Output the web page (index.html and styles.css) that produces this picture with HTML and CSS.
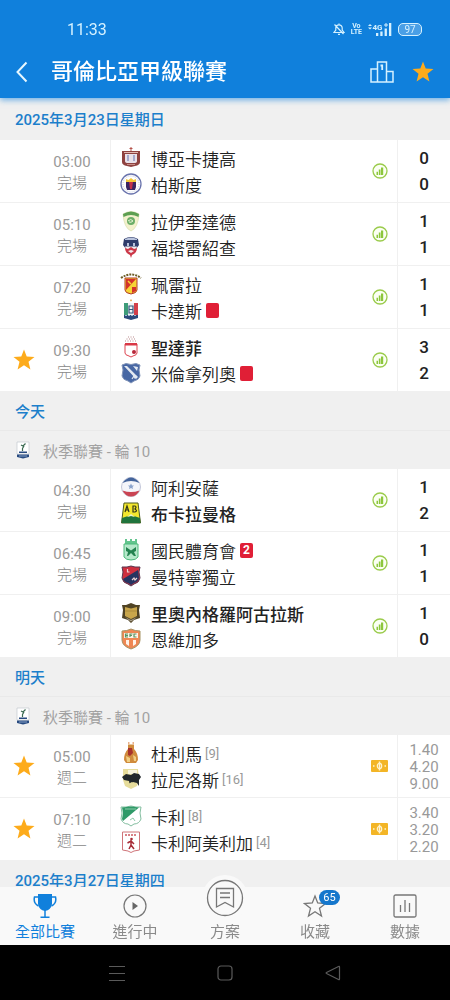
FILE: index.html
```html
<!DOCTYPE html>
<html lang="zh-Hant">
<head>
    <meta charset="UTF-8" />
    <meta name="viewport" content="width=device-width, initial-scale=1" />
    <title>哥倫比亞甲級聯賽</title>
    <link rel="stylesheet" href="styles.css">
</head>
<body>
    <!-- shared icons -->
    <svg class="sprite" aria-hidden="true">
        <symbol id="star" viewBox="0 0 22 22">
            <path fill="#fdab1b" d="M11 .5l2.700 7 7.800.6-6 4.700 1.900 7.700L11 16.200l-6.400 4.300 1.900-7.700-6-4.700 7.800-.6z"/>
        </symbol>
        <symbol id="stats" viewBox="0 0 16 16">
            <circle cx="8" cy="8" r="7" fill="#fbfff3" stroke="#9acb4b" stroke-width="1.300"/>
            <path fill="#8cc63c" d="M4.500 8.800h1.500V12H4.500zM6.800 6.500h1.700V12H6.800zM9 4.500h2.200V12H9z"/>
        </symbol>
        <symbol id="odds" viewBox="0 0 17 12">
            <rect width="17" height="12" rx="1" fill="#f3b526"/>
            <ellipse cx="8.500" cy="6" rx="2.200" ry="2.600" fill="none" stroke="#fff3cf" stroke-width="1.200"/>
            <path stroke="#fff3cf" stroke-width="1.500" d="M8.500 1.500v9M2 6h1.500M13.500 6H15"/>
        </symbol>
        <symbol id="league" viewBox="0 0 14 18">
            <path fill="#fff" stroke="#c3c9ce" stroke-width=".7" d="M1 1h12v12H1z"/>
            <path fill="none" stroke="#3b6b52" stroke-width="1.200" d="M5 4l2 1 2.500-2.500M8 5L6.500 7.500V10"/>
            <path fill="#274a80" d="M3 10.500h8V12H3zM1 13.500h12V16l-6 1.500L1 16z"/>
            <path stroke="#9db4d6" stroke-width=".8" d="M3 15h8"/>
        </symbol>
    </svg>

    <div class="app">
        <header class="header">
            <div class="status">
                <span class="clock">11:33</span>
                <div class="status-icons">
                    <svg width="12" height="12" viewBox="0 0 12 12" fill="none" stroke="#d5f1ff" stroke-width="1.200">
                        <path d="M1 9.500h10L9.200 7V5a3.200 3.200 0 0 0-6.400 0v2zM6 .5v1.500M5 11.300h2M1.500 1.500l9 9.500"/>
                    </svg>
                    <span class="volte"><span>Vo</span><span>LTE</span></span>
                    <svg width="24" height="13" viewBox="0 0 24 13" fill="#d5f1ff">
                        <path d="M0 3l2-2 2 2zM0 4.500h4l-2 2zM8 10h2.300v3H8zM12.300 8.500h2.300V13h-2.300zM16.600 5.500h2.300V13h-2.300zM21 0h2.300v13H21z"/>
                        <text x="4.500" y="7" class="net">4G</text>
                        <path d="M16 1.500h4v1h-4zM17.500 0h1v4h-1z"/>
                    </svg>
                    <span class="battery">97</span>
                </div>
            </div>
            <div class="titlebar">
                <button class="icon-btn back" aria-label="返回">
                    <svg width="14" height="22" viewBox="0 0 14 22" fill="none" stroke="#e6f7ff" stroke-width="2"><path d="M10.500 1.500L1.500 11l9 9.500"/></svg>
                </button>
                <h1>哥倫比亞甲級聯賽</h1>
                <button class="icon-btn" aria-label="排名">
                    <svg width="24" height="22" viewBox="0 0 24 22" fill="none" stroke="#d5f1ff" stroke-width="1.500">
                        <path d="M7.500 21V1h9v20M7.500 8H1v13h22V10.500h-6.500"/>
                        <path stroke-width="1.800" d="M10.500 4.500h1.700V9"/>
                    </svg>
                </button>
                <button class="icon-btn" aria-label="收藏">
                    <svg width="22" height="22"><use href="#star"/></svg>
                </button>
            </div>
        </header>

        <main class="matches">
            <section>
                <h2 class="date first">2025年3月23日星期日</h2>
                <ul>
                    <li class="match">
                        <div class="fav"></div>
                        <div class="time"><span>03:00</span><span>完場</span></div>
                        <div class="teams">
                            <div class="team">
                                <svg class="crest" viewBox="0 0 22 22">
                                    <path d="M11 0v4M9.500 1.500h3" stroke="#b5524a"/>
                                    <path fill="#8f4240" d="M2 4h18v11q0 3-5 4l-4 1-4-1q-5-1-5-4z"/>
                                    <path fill="#e9e2ea" d="M5 7h12v7q0 2-3 2H8q-3 0-3-2z"/>
                                    <path fill="#a6a9cc" d="M7 8h2v6H7zM13 8h2v6h-2z"/>
                                    <path stroke="#e3b9b2" d="M4 5.500h14"/>
                                    <path stroke="#c98f88" d="M7 17.500h8"/>
                                </svg>
                                <span>博亞卡捷高</span>
                            </div>
                            <div class="team">
                                <svg class="crest" viewBox="0 0 22 22">
                                    <circle cx="11" cy="11" r="10" fill="#fff" stroke="#6a74ad" stroke-width="1.300"/>
                                    <circle cx="11" cy="11" r="8" fill="none" stroke="#c5cae0" stroke-dasharray="1 1"/>
                                    <path fill="#f3c63a" d="M6 6l2.500 1L11 5l2.500 2L16 6v4H6z"/>
                                    <path fill="#3a2563" d="M6 9h10v5l-1 3H7l-1-3z"/>
                                    <path fill="#c2314b" d="M9 9h4l-1 7h-2z"/>
                                </svg>
                                <span>柏斯度</span>
                            </div>
                        </div>
                        <div class="info"><svg width="16" height="16"><use href="#stats"/></svg></div>
                        <div class="score"><span>0</span><span>0</span></div>
                    </li>
                    <li class="match">
                        <div class="fav"></div>
                        <div class="time"><span>05:10</span><span>完場</span></div>
                        <div class="teams">
                            <div class="team">
                                <svg class="crest" viewBox="0 0 22 22">
                                    <path fill="#f4f1cd" stroke="#d9dfae" stroke-width=".7" d="M3 4q8-5 16 0-1 14-8 17Q4 18 3 4z"/>
                                    <path fill="#5d9f52" d="M3 4q8-5 16 0l-.5 3Q11 3 3.500 7z"/>
                                    <circle cx="11" cy="11" r="4" fill="#6cae68"/>
                                    <path fill="none" stroke="#e9f3d3" d="M8 11q3-3 5 0-2 2-4 1"/>
                                </svg>
                                <span>拉伊奎達德</span>
                            </div>
                            <div class="team">
                                <svg class="crest" viewBox="0 0 22 22">
                                    <path fill="#2f3c6b" d="M4 3q7-4 14 0l1 6-3 4H6L3 9z"/>
                                    <path fill="#b9c3dc" d="M5 3q6-3 12 0v1H5zM7 7h2v3H7zM13 7h2v3h-2z"/>
                                    <path fill="#f2edf0" d="M5 10.500h12l-1 3H6z"/>
                                    <path fill="#cc3848" d="M5 12l3 1 3-2 3 2 3-1q0 5-5 7l-1 3-1-3q-5-2-5-7z"/>
                                    <path fill="#f2edf0" d="M8 15l3-1 3 1-3 2z"/>
                                </svg>
                                <span>福塔雷紹查</span>
                            </div>
                        </div>
                        <div class="info"><svg width="16" height="16"><use href="#stats"/></svg></div>
                        <div class="score"><span>1</span><span>1</span></div>
                    </li>
                    <li class="match">
                        <div class="fav"></div>
                        <div class="time"><span>07:20</span><span>完場</span></div>
                        <div class="teams">
                            <div class="team">
                                <svg class="crest" viewBox="0 0 22 22">
                                    <path fill="none" stroke="#6b5b25" stroke-width="2" stroke-dasharray="2 1" d="M1 5q10-7 20 0"/>
                                    <path fill="#f6d535" stroke="#b23a2a" d="M5 5h12v12q0 3-6 4-6-1-6-4z"/>
                                    <path fill="#d4332b" d="M6 6h10L6 17zM12 14h4v4l-4 2z"/>
                                    <path stroke="#f6d535" stroke-width="1.500" d="M8 8l3 3"/>
                                </svg>
                                <span>珮雷拉</span>
                            </div>
                            <div class="team">
                                <svg class="crest" viewBox="0 0 22 22">
                                    <path fill="#e7a24c" d="M11 0l1 1.500-1 1-1-1z"/>
                                    <path fill="#3e9c7a" d="M4 4h5v12H4z"/>
                                    <path fill="#f1f4f4" d="M8 4h6v12H8z"/>
                                    <path fill="#d3404a" d="M14 4h4v12h-4z"/>
                                    <path fill="none" stroke="#34567e" stroke-width="1.200" d="M9 7h4v7H9zM9 10.500h4"/>
                                    <path fill="#2c4a7c" d="M4 16h14v3l-7 2-7-2z"/>
                                    <path stroke="#9fb7cf" d="M5 16.500h12" stroke-dasharray="2 1"/>
                                </svg>
                                <span>卡達斯</span>
                                <span class="red-card"></span>
                            </div>
                        </div>
                        <div class="info"><svg width="16" height="16"><use href="#stats"/></svg></div>
                        <div class="score"><span>1</span><span>1</span></div>
                    </li>
                    <li class="match">
                        <div class="fav"><svg width="22" height="22"><use href="#star"/></svg></div>
                        <div class="time"><span>09:30</span><span>完場</span></div>
                        <div class="teams">
                            <div class="team winner">
                                <svg class="crest" viewBox="0 0 22 22">
                                    <path fill="none" stroke="#b9898b" stroke-dasharray="1 1.500" d="M8 1h6M6.500 3h9M5 5h12"/>
                                    <path fill="#fff" stroke="#dd4450" d="M5 8h12v9q0 2-4 3l-2 1-2-1q-4-1-4-3z"/>
                                    <path fill="#d93846" d="M5 7h12v2.500H5z"/>
                                    <circle cx="14" cy="16" r="2" fill="#b7283a"/>
                                </svg>
                                <span>聖達菲</span>
                            </div>
                            <div class="team">
                                <svg class="crest" viewBox="0 0 22 22">
                                    <path fill="#4767a4" stroke="#8194b8" d="M2 3l4-1.500 5 1 5-1L20 3l-1 5 1 6q-1 4-6 5l-3 2-3-2q-5-1-6-5l1-6z"/>
                                    <path fill="#e4eaf2" d="M4 4h3l11 11-2 2zM13 4l5 1-1 4z"/>
                                    <path fill="none" stroke="#e4eaf2" stroke-width="1.200" d="M12 17l2-3 1 2 2-2"/>
                                </svg>
                                <span>米倫拿列奧</span>
                                <span class="red-card"></span>
                            </div>
                        </div>
                        <div class="info"><svg width="16" height="16"><use href="#stats"/></svg></div>
                        <div class="score"><span>3</span><span>2</span></div>
                    </li>
                </ul>
            </section>

            <section>
                <h2 class="date">今天</h2>
                <div class="round"><svg width="14" height="18"><use href="#league"/></svg>秋季聯賽 - 輪 10</div>
                <ul>
                    <li class="match">
                        <div class="fav"></div>
                        <div class="time"><span>04:30</span><span>完場</span></div>
                        <div class="teams">
                            <div class="team">
                                <svg class="crest" viewBox="0 0 22 22">
                                    <circle cx="11" cy="11" r="9.500" fill="#f4f5fa" stroke="#c3c7d9"/>
                                    <path fill="#44649b" d="M2.500 7q8.500-11 17 0-8.500-4-17 0z"/>
                                    <path fill="#ca4453" d="M2.500 14.500q8.500 3 17 0-3 6-8.500 6t-8.500-6z"/>
                                    <path fill="#8aa3cc" d="M11 7.500l1 2h2L12.500 11l.5 2-2-1-2 1 .5-2L8 9.500h2z"/>
                                </svg>
                                <span>阿利安薩</span>
                            </div>
                            <div class="team winner">
                                <svg class="crest" viewBox="0 0 22 22">
                                    <path fill="#f4e72e" stroke="#4d5b20" d="M4 1h14l2.500 20h-19z"/>
                                    <path fill="#20743c" d="M2 16q9-4 18 0l.5 5h-19z"/>
                                    <path fill="#e9f1cf" d="M7 15l4-3 4 3-4-1z"/>
                                    <path fill="none" stroke="#30351a" stroke-width="1.200" d="M5 10l2-6 2 6M6 8h2.500M13 4v6h2q3-1 0-3 2-2 0-3z"/>
                                </svg>
                                <span>布卡拉曼格</span>
                            </div>
                        </div>
                        <div class="info"><svg width="16" height="16"><use href="#stats"/></svg></div>
                        <div class="score"><span>1</span><span>2</span></div>
                    </li>
                    <li class="match">
                        <div class="fav"></div>
                        <div class="time"><span>06:45</span><span>完場</span></div>
                        <div class="teams">
                            <div class="team">
                                <svg class="crest" viewBox="0 0 22 22">
                                    <path fill="#63c58e" d="M5 0h2v2h3V0h2v2h3V0h2v5H5z"/>
                                    <path fill="#b5e8ca" stroke="#4cb97b" d="M4 5h14v13q-2 3-7 3t-7-3z"/>
                                    <path fill="#23824f" d="M6 8l5 3.500L16 8v4l-2 1 2 4h-2l-3-3-3 3H7l1-4-2-1z"/>
                                </svg>
                                <span>國民體育會</span>
                                <span class="red-card">2</span>
                            </div>
                            <div class="team">
                                <svg class="crest" viewBox="0 0 22 22">
                                    <path fill="#cf2f3f" stroke="#58364f" d="M2 2h5l4-1 4 1h5l-1 5 1 6q-1 5-6 6l-3 2-3-2q-5-1-6-6l1-6z"/>
                                    <path fill="#263461" d="M18 5l1 8q-1 4-5 5l-3 2-3-2q-4-1-5-4z"/>
                                    <path fill="none" stroke="#efd4d5" stroke-width="1.200" d="M7.500 4v3h2M12 15l2-2 1 2 2-2"/>
                                </svg>
                                <span>曼特寧獨立</span>
                            </div>
                        </div>
                        <div class="info"><svg width="16" height="16"><use href="#stats"/></svg></div>
                        <div class="score"><span>1</span><span>1</span></div>
                    </li>
                    <li class="match">
                        <div class="fav"></div>
                        <div class="time"><span>09:00</span><span>完場</span></div>
                        <div class="teams">
                            <div class="team winner">
                                <svg class="crest" viewBox="0 0 22 22">
                                    <path fill="#504324" d="M2 3l4 0 5-2 5 2h4l-1 5 1 8-6 2-3 3-3-3-6-2 1-8z"/>
                                    <path fill="#c9a64b" d="M5 5l6 1.500L17 5v9l-6 3-6-3z"/>
                                    <path stroke="#ac8b3d" d="M5 9h12"/>
                                    <path fill="#a8a08c" d="M5 15l6 3 6-3-3 2.500-3 2-3-2z"/>
                                </svg>
                                <span>里奧內格羅阿古拉斯</span>
                            </div>
                            <div class="team">
                                <svg class="crest" viewBox="0 0 22 22">
                                    <path fill="#ef8753" stroke="#a69365" d="M2 3q5 0 9-2 4 2 9 2v9q0 6-9 9-9-3-9-9z"/>
                                    <path fill="#fff3e8" d="M4 5h14v5H4zM6 12h3v6l-3-2zM13 12h3v4l-3 2z"/>
                                    <path fill="none" stroke="#579463" stroke-width="1.200" d="M8 6H5.500v3H8M5.500 7.500H8M10 9V6h2.500M10 7.500h2M16.500 6H14v3h2.500"/>
                                </svg>
                                <span>恩維加多</span>
                            </div>
                        </div>
                        <div class="info"><svg width="16" height="16"><use href="#stats"/></svg></div>
                        <div class="score"><span>1</span><span>0</span></div>
                    </li>
                </ul>
            </section>

            <section>
                <h2 class="date">明天</h2>
                <div class="round"><svg width="14" height="18"><use href="#league"/></svg>秋季聯賽 - 輪 10</div>
                <ul>
                    <li class="match">
                        <div class="fav"><svg width="22" height="22"><use href="#star"/></svg></div>
                        <div class="time"><span>05:00</span><span>週二</span></div>
                        <div class="teams">
                            <div class="team">
                                <svg class="crest" viewBox="0 0 22 22">
                                    <path fill="#e9b08a" d="M8 0h1.500v2H8zM12.500 0H14v2h-1.500z"/>
                                    <path fill="#d08b3c" d="M8 2.500h6V7q4 4 4 11l-2 3H6l-2-3q0-7 4-11z"/>
                                    <path fill="#a8332c" d="M8 6h4l1 5-3 3-2-1z"/>
                                    <path fill="#f0cf82" d="M6 14l4 2v4H7zM13 13l3 2v4h-2z"/>
                                </svg>
                                <span>杜利馬</span><small>[9]</small>
                            </div>
                            <div class="team">
                                <svg class="crest" viewBox="0 0 22 22">
                                    <path fill="#e6dc9b" d="M3 1h15l1 11-2 6-6 3-6-3-2-6z"/>
                                    <path fill="#f6f3dc" d="M8 2h9v4H8z"/>
                                    <path fill="#22282b" d="M2 9l4-3 5 1 3-2 5 1 2 3-2 3v6l-2-3-4-1-3 4-1-5-5-1z"/>
                                    <path fill="#e6dc9b" d="M8 16l4-2 3 2-4 4z"/>
                                </svg>
                                <span>拉尼洛斯</span><small>[16]</small>
                            </div>
                        </div>
                        <div class="info"><svg width="17" height="12"><use href="#odds"/></svg></div>
                        <div class="score odds"><span>1.40</span><span>4.20</span><span>9.00</span></div>
                    </li>
                    <li class="match">
                        <div class="fav"><svg width="22" height="22"><use href="#star"/></svg></div>
                        <div class="time"><span>07:10</span><span>週二</span></div>
                        <div class="teams">
                            <div class="team">
                                <svg class="crest" viewBox="0 0 22 22">
                                    <path fill="#fff" stroke="#83bea0" d="M1 2h5l5-1 5 1h5l-1 6 1 6q-2 5-7 5l-3 2-3-2q-5 0-7-5l1-6z"/>
                                    <path fill="#2f9a68" d="M2 2.500l9-1 8 1L3 16l-1-2 1-6z"/>
                                    <path fill="none" stroke="#8ecbab" d="M5 4h11M10 15l3-2 2 3"/>
                                </svg>
                                <span>卡利</span><small>[8]</small>
                            </div>
                            <div class="team">
                                <svg class="crest" viewBox="0 0 22 22">
                                    <path fill="#fff" stroke="#cf7479" d="M2.500 1h17v18l-5.500 1-3 1.500L8 20l-5.500-1z"/>
                                    <path stroke="#cb5960" stroke-width="1.500" stroke-dasharray="2 1" d="M5 4h12"/>
                                    <circle cx="11.500" cy="8" r="1.300" fill="#a72c37"/>
                                    <path fill="none" stroke="#a72c37" stroke-width="1.500" d="M11 9v5l-2 4M11 14l3 4M7.500 12l3.500-2 3 3"/>
                                </svg>
                                <span>卡利阿美利加</span><small>[4]</small>
                            </div>
                        </div>
                        <div class="info"><svg width="17" height="12"><use href="#odds"/></svg></div>
                        <div class="score odds"><span>3.40</span><span>3.20</span><span>2.20</span></div>
                    </li>
                </ul>
            </section>

            <section>
                <h2 class="date">2025年3月27日星期四</h2>
            </section>
        </main>

        <nav class="tabs">
            <a href="#" class="active">
                <svg width="24" height="24" viewBox="0 0 24 24">
                    <path fill="#1080dc" d="M5 0h14v10q-1 6-7 7-6-1-7-7z"/>
                    <path fill="none" stroke="#1080dc" stroke-width="1.500" d="M5 3H1.500q-1.500 6 4 9M19 3h3.500q1.500 6-4 9M12 16v7M7.500 23.200h9"/>
                </svg>
                <span>全部比賽</span>
            </a>
            <a href="#">
                <svg width="24" height="24" viewBox="0 0 24 24">
                    <circle cx="12" cy="12" r="11" fill="none" stroke="#777" stroke-width="1.200"/>
                    <path fill="#666" d="M9.500 8l5.500 4-5.500 4z"/>
                </svg>
                <span>進行中</span>
            </a>
            <a href="#" class="plan">
                <span class="plan-icon">
                    <svg width="38" height="38" viewBox="0 0 38 38" fill="none" stroke="#777" stroke-width="1.300">
                        <circle cx="19" cy="19" r="17.500"/>
                        <path d="M10.500 9.500h17V28L19 23.500 10.500 28zM14 14h10M14 18.500h10"/>
                    </svg>
                </span>
                <span>方案</span>
            </a>
            <a href="#">
                <span class="badge-wrap">
                    <svg width="24" height="24" viewBox="0 0 24 24">
                        <path fill="none" stroke="#777" stroke-width="1.300" d="M12 2l2.700 7 7.800.5-6 4.800 2 7.700-6.500-4.300L5.500 22l2-7.700-6-4.800 7.800-.5z"/>
                    </svg>
                    <span class="badge">65</span>
                </span>
                <span>收藏</span>
            </a>
            <a href="#">
                <svg width="24" height="24" viewBox="0 0 24 24" fill="none" stroke="#777" stroke-width="1.300">
                    <rect x="1" y="1" width="22" height="22" rx="1.500"/>
                    <path d="M7.500 11v7M12 6v12M16.500 9v9"/>
                </svg>
                <span>數據</span>
            </a>
        </nav>

        <footer class="system">
            <button aria-label="選單"><svg width="16" height="16" viewBox="0 0 16 16" stroke="#5a5a5a"><path d="M0 1.500h16M0 8.500h16M0 15.500h16"/></svg></button>
            <button aria-label="主頁"><svg width="16" height="16" viewBox="0 0 16 16" fill="none" stroke="#5a5a5a" stroke-width="1.200"><rect x="1" y="1" width="14" height="14" rx="3"/></svg></button>
            <button aria-label="返回"><svg width="16" height="16" viewBox="0 0 16 16" fill="none" stroke="#5a5a5a" stroke-width="1.200"><path d="M14.500 2v12q0 1-1 .5l-12-6q-.8-.5 0-1l12-6q1-.5 1 .5z"/></svg></button>
        </footer>
    </div>
</body>
</html>
```
FILE: styles.css
```css
* {
    box-sizing: border-box;
}
body {
    margin: 0;
    font-family: Roboto, "Noto Sans CJK TC", sans-serif;
    background: #fff;
    color: #222;
}
h1, h2, ul {
    margin: 0;
    padding: 0;
}
ul {
    list-style: none;
}
svg {
    display: block;
}
button {
    padding: 0;
    border: none;
    background: none;
    cursor: pointer;
}
.sprite {
    display: none;
}
.app {
    display: flex;
    flex-direction: column;
    height: 100vh;
}

/* header */
.header {
    position: relative;
    z-index: 1;
    background: #1080dc;
    color: #fff;
    box-shadow: 0 2px 6px rgba(16, 128, 220, 0.6);
}
.status {
    display: flex;
    justify-content: space-between;
    align-items: center;
    height: 46px;
    padding: 12px 28px 0 67px;
    color: #d5f1ff;
}
.clock {
    font-size: 16px;
}
.status-icons {
    display: flex;
    align-items: center;
    gap: 6px;
}
.volte {
    display: flex;
    flex-direction: column;
    align-items: center;
    font-size: 7px;
    font-weight: 700;
    line-height: 6px;
}
.net {
    font-size: 8px;
    font-weight: 700;
}
.battery {
    width: 24px;
    height: 13px;
    border: 1px solid #d5f1ff;
    border-radius: 5px;
    font-size: 10px;
    line-height: 11px;
    text-align: center;
    background: #4a9fe6;
}
.titlebar {
    display: flex;
    align-items: center;
    height: 52px;
    padding: 0 16px;
    gap: 18px;
}
.titlebar h1 {
    flex: 1;
    margin-left: 3px;
    font-size: 22px;
    font-weight: 500;
    line-height: 30px;
}

/* match list */
.matches {
    flex: 1;
    min-height: 0;
    overflow-y: auto;
    scrollbar-width: none;
    background: #f0f0f0;
}
.date {
    height: 39px;
    padding-left: 15px;
    font-size: 15px;
    font-weight: 500;
    line-height: 42px;
    color: #1c7fcb;
}
.date.first {
    height: 42px;
    line-height: 45px;
}
.round {
    display: flex;
    align-items: center;
    gap: 13px;
    height: 39px;
    padding-left: 16px;
    border-top: 1px solid #e9e9e9;
    font-size: 15px;
    color: #a2a2a2;
}
.match {
    display: flex;
    background: #fff;
}
.match + .match {
    border-top: 1px solid #f0f0f0;
}
.fav {
    display: flex;
    align-items: center;
    justify-content: center;
    width: 48px;
}
.time {
    display: flex;
    flex-direction: column;
    justify-content: center;
    width: 62px;
    padding: 4px 14px 0 0;
    font-size: 15px;
    line-height: 21px;
    text-align: center;
    color: #999;
}
.time span:last-child {
    font-weight: 300;
    color: #888;
}
.teams {
    flex: 1;
    padding: 5px 0 5px 9px;
    border-left: 1px solid #f0f0f0;
}
.team {
    display: flex;
    align-items: center;
    height: 26px;
    font-size: 17px;
    font-weight: 350;
}
.team small {
    margin-left: 3px;
    font-size: 13px;
    font-weight: 400;
    color: #999;
}
.team.winner {
    font-weight: 500;
}
.crest {
    width: 22px;
    height: 22px;
    margin-right: 9px;
}
.red-card {
    width: 13px;
    height: 15px;
    margin-left: 4px;
    border-radius: 2px;
    background: #e01f36;
    color: #fff;
    font-size: 12px;
    font-weight: 700;
    line-height: 15px;
    text-align: center;
}
.info {
    display: flex;
    align-items: center;
    justify-content: center;
    width: 35px;
}
.score {
    display: flex;
    flex-direction: column;
    justify-content: center;
    width: 53px;
    border-left: 1px solid #f0f0f0;
    font-size: 17px;
    font-weight: 500;
    line-height: 26px;
    text-align: center;
}
.score.odds {
    padding-top: 2px;
    font-size: 15px;
    font-weight: 400;
    line-height: 17px;
    color: #999;
}

/* bottom tabs */
.tabs {
    position: relative;
    display: flex;
    height: 58px;
    background: #f9f9f9;
}
.tabs a {
    flex: 1;
    display: flex;
    flex-direction: column;
    align-items: center;
    justify-content: flex-end;
    gap: 3px;
    padding-bottom: 2px;
    font-size: 15px;
    line-height: 22px;
    text-decoration: none;
    color: #8a8a8a;
}
.tabs .active {
    color: #1080dc;
}
.plan-icon {
    padding: 4px;
    border-radius: 50%;
    background: #f9f9f9;
}
.tabs .plan {
    gap: 0;
}
.badge-wrap {
    position: relative;
}
.badge {
    position: absolute;
    left: 16px;
    top: -4px;
    width: 21px;
    border-radius: 8px;
    background: #1577cc;
    color: #fff;
    font-size: 11px;
    line-height: 15px;
    text-align: center;
}
.system {
    display: flex;
    align-items: center;
    justify-content: center;
    gap: 92px;
    height: 55px;
    background: #000;
}
```
